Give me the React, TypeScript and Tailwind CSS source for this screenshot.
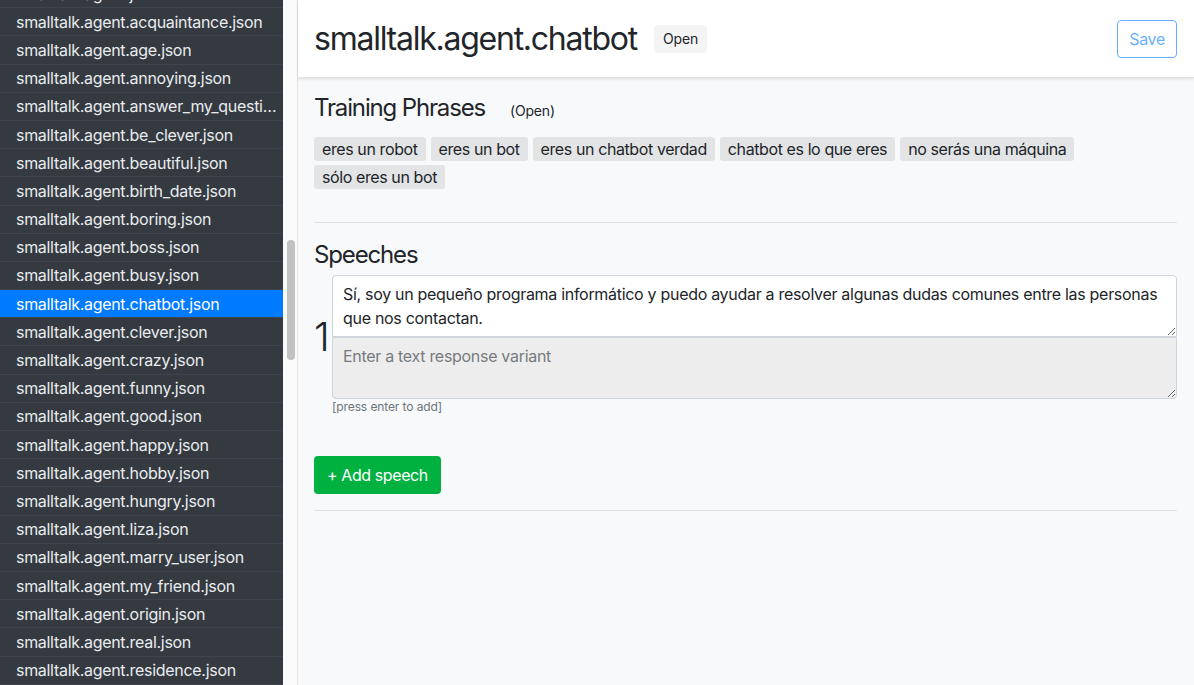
import React from "react";

const files = [
  "smalltalk.agent.json",
  "smalltalk.agent.acquaintance.json",
  "smalltalk.agent.age.json",
  "smalltalk.agent.annoying.json",
  "smalltalk.agent.answer_my_question.json",
  "smalltalk.agent.be_clever.json",
  "smalltalk.agent.beautiful.json",
  "smalltalk.agent.birth_date.json",
  "smalltalk.agent.boring.json",
  "smalltalk.agent.boss.json",
  "smalltalk.agent.busy.json",
  "smalltalk.agent.chatbot.json",
  "smalltalk.agent.clever.json",
  "smalltalk.agent.crazy.json",
  "smalltalk.agent.funny.json",
  "smalltalk.agent.good.json",
  "smalltalk.agent.happy.json",
  "smalltalk.agent.hobby.json",
  "smalltalk.agent.hungry.json",
  "smalltalk.agent.liza.json",
  "smalltalk.agent.marry_user.json",
  "smalltalk.agent.my_friend.json",
  "smalltalk.agent.origin.json",
  "smalltalk.agent.real.json",
  "smalltalk.agent.residence.json",
  "smalltalk.agent.right.json",
];

const phrases = [
  "eres un robot",
  "eres un bot",
  "eres un chatbot verdad",
  "chatbot es lo que eres",
  "no serás una máquina",
  "sólo eres un bot",
];

const Sidebar = ({ active }: { active: string }) => {
  return (
    <div className="flex h-full shrink-0">
      <div className="w-[283px] h-full overflow-hidden bg-[#343a40]">
        <div className="mt-[-20px]">
          {files.map((f) => (
            <div
              key={f}
              className={`h-[28.2px] flex items-center pl-4 pr-1 border-b border-b-[#3e444b] text-[16px] ${
                f === active ? "bg-[#007bff] text-white" : "text-[#e9ecef]"
              }`}
            >
              <span className="truncate">{f}</span>
            </div>
          ))}
        </div>
      </div>
      <div className="w-[14px] h-full bg-[#fafafa] pt-[240px] pl-[4px]">
        <div className="w-[8px] h-[120px] rounded-full bg-[#c1c1c1]" />
      </div>
    </div>
  );
};

export default function App() {
  return (
    <div
      className="flex h-[685px] w-[1194px] overflow-hidden text-[#212529] tracking-[-0.3px]"
      style={{ fontFamily: "Inter, 'Noto Sans', sans-serif" }}
    >
      <Sidebar active="smalltalk.agent.chatbot.json" />
      <div className="flex-1 h-full flex flex-col bg-[#f8f9fa] border-l border-l-[#e6e6e6]">
        <div className="h-[78px] shrink-0 bg-white flex items-center justify-between pl-4 pr-[17px] shadow-[0_1px_3px_rgba(0,0,0,0.12)] border-b border-b-[#e3e3e3]">
          <div className="flex items-center">
            <h1 className="text-[32px] leading-none font-normal tracking-[-1.25px]">
              smalltalk.agent.chatbot
            </h1>
            <span className="ml-[17px] h-[28px] px-[9px] flex items-center bg-[#f4f4f5] rounded text-[14px] tracking-[-0.1px]">
              Open
            </span>
          </div>
          <button className="h-[38px] px-[11px] rounded border border-[#007bff] text-[#007bff] text-[16px] opacity-60">
            Save
          </button>
        </div>
        <div className="pl-4 pr-[17px]">
          <div className="flex items-end mt-[15px]">
            <h2 className="text-[24px] leading-[30px] font-normal tracking-[-1.15px]">
              Training Phrases
            </h2>
            <span className="ml-[25px] mb-[2px] text-[14px] tracking-[-0.2px]">(Open)</span>
          </div>
          <div className="flex flex-wrap gap-x-[5px] gap-y-[4px] mt-[14px]">
            {phrases.map((p) => (
              <span
                key={p}
                className="h-[24px] flex items-center px-2 bg-[#e3e4e6] rounded-[3px] text-[16px] tracking-[-0.4px]"
              >
                {p}
              </span>
            ))}
          </div>
          <hr className="mt-[33px] border-t border-t-[#dee2e6]" />
          <h2 className="mt-[17px] text-[24px] leading-[29px] font-normal tracking-[-1.15px]">
            Speeches
          </h2>
          <div className="mt-[6px] flex items-center">
            <div className="w-[18px] text-[40px] leading-none font-light">1</div>
            <div className="flex-1 flex flex-col">
              <textarea
                className="h-[62px] resize-y bg-white border border-[#ced4da] rounded-t px-[10px] py-[6px] text-[16px] leading-[24px] outline-none"
                defaultValue="Sí, soy un pequeño programa informático y puedo ayudar a resolver algunas dudas comunes entre las personas que nos contactan."
              />
              <textarea
                className="h-[62px] resize-y bg-[#ededed] border border-[#ced4da] rounded-b px-[10px] py-[6px] text-[16px] leading-[24px] outline-none placeholder:text-[#777b80]"
                placeholder="Enter a text response variant"
              />
            </div>
          </div>
          <div className="ml-[18px] mt-[1px] text-[12px] leading-[14px] text-[#6c757d] tracking-[-0.1px]">
            [press enter to add]
          </div>
          <button className="mt-[42px] h-[38px] px-[13px] rounded bg-[#00b140] text-white text-[16px] tracking-[-0.4px]">
            + Add speech
          </button>
          <hr className="mt-[16px] border-t border-t-[#dee2e6]" />
        </div>
      </div>
    </div>
  );
}
